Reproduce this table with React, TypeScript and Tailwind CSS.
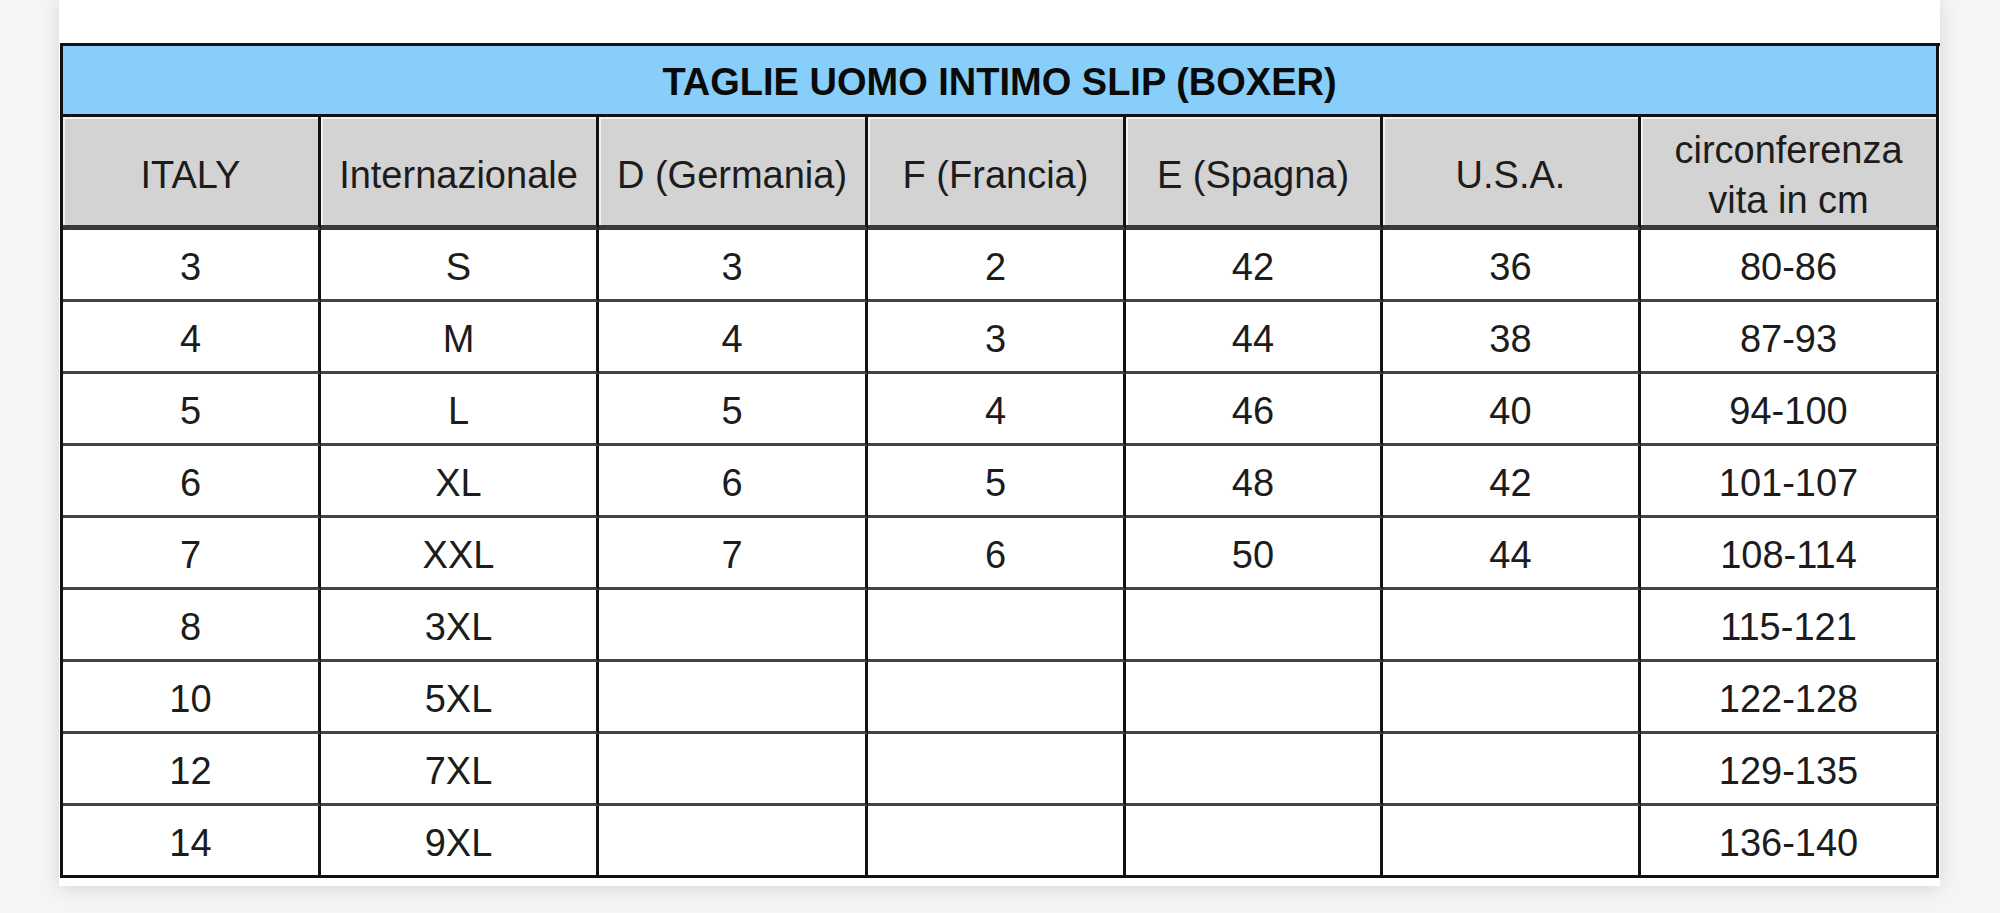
import React from "react";

const headers: React.ReactNode[] = [
  "ITALY",
  "Internazionale",
  "D (Germania)",
  "F (Francia)",
  "E (Spagna)",
  "U.S.A.",
  <>
    circonferenza
    <br />
    vita in cm
  </>,
];

const rows: string[][] = [
  ["3", "S", "3", "2", "42", "36", "80-86"],
  ["4", "M", "4", "3", "44", "38", "87-93"],
  ["5", "L", "5", "4", "46", "40", "94-100"],
  ["6", "XL", "6", "5", "48", "42", "101-107"],
  ["7", "XXL", "7", "6", "50", "44", "108-114"],
  ["8", "3XL", "", "", "", "", "115-121"],
  ["10", "5XL", "", "", "", "", "122-128"],
  ["12", "7XL", "", "", "", "", "129-135"],
  ["14", "9XL", "", "", "", "", "136-140"],
];

export default function App() {
  return (
    <div
      className="h-[913px] w-full overflow-hidden bg-[#f5f5f5]"
      style={{ fontFamily: '"Liberation Sans", Arial, sans-serif' }}
    >
      <div className="ml-[59px] w-[1881px] bg-white pl-px pt-[43px] pb-[8px] shadow-[0_2px_18px_rgba(0,0,0,0.13)]">
        <div className="grid grid-cols-[258px_278px_269px_258px_257px_258px_298px] border-l-[3px] border-t-[3px] border-[#111] text-[#1c1c1c]">
          <div className="col-span-7 flex h-[71px] items-center justify-center border-b-[3px] border-r-[3px] border-[#111] bg-[#87cefa] pt-[5px] text-[38px] font-bold text-[#0a0a0a]">
            TAGLIE UOMO INTIMO SLIP (BOXER)
          </div>
          {headers.map((h, i) => (
            <div
              key={i}
              className="flex h-[113px] items-center justify-center border-b-[5px] border-r-[3px] border-b-[#3a3a3a] border-r-[#111] bg-[#d3d3d3] pt-[8px] text-center text-[38px] leading-[50px] shadow-[inset_2px_2px_0_#f2f2f2]"
            >
              <span>{h}</span>
            </div>
          ))}
          {rows.map((r, ri) =>
            r.map((c, ci) => (
              <div
                key={`${ri}-${ci}`}
                className={
                  ri === rows.length - 1
                    ? "flex h-[72px] items-center justify-center border-b-[3px] border-r-[3px] border-b-[#111] border-r-[#111] bg-white pt-[5px] text-[38px]"
                    : "flex h-[72px] items-center justify-center border-b-[3px] border-r-[3px] border-b-[#444] border-r-[#111] bg-white pt-[5px] text-[38px]"
                }
              >
                {c}
              </div>
            ))
          )}
        </div>
      </div>
    </div>
  );
}
